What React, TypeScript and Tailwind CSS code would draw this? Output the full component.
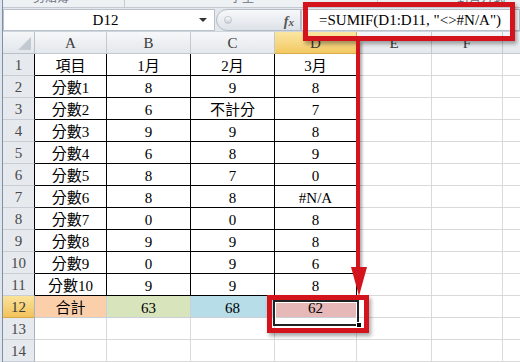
import React from "react";

const data: string[][] = [
  ["項目", "1月", "2月", "3月"],
  ["分數1", "8", "9", "8"],
  ["分數2", "6", "不計分", "7"],
  ["分數3", "9", "9", "8"],
  ["分數4", "6", "8", "9"],
  ["分數5", "8", "7", "0"],
  ["分數6", "8", "8", "#N/A"],
  ["分數7", "0", "0", "8"],
  ["分數8", "9", "9", "8"],
  ["分數9", "0", "9", "6"],
  ["分數10", "9", "9", "8"],
  ["合計", "63", "68", "62"],
];

const colW = ["w-[72px]", "w-[84px]", "w-[84px]", "w-[82px]"];
const totalBg = ["bg-[#fbcfaa]", "bg-[#d8e4bc]", "bg-[#b7dde8]", "bg-[#e6b9b8]"];

function RowHeader({ n, sel, black }: { n: number; sel?: boolean; black?: boolean }) {
  return (
    <div
      className={
        "w-[32px] h-full flex items-center justify-center pt-[2px] text-[15px] border-b border-r " +
        (sel
          ? "bg-gradient-to-b from-[#fbe29a] to-[#f2c35a] text-[#3b3b3b] border-b-[#d4a94a] "
          : "bg-[#e6e9ed] text-[#4a4a4a] border-b-[#c9ced6] ") +
        (black ? "border-r-black" : "border-r-[#a9b4c2]")
      }
    >
      {n}
    </div>
  );
}

function GrayCells() {
  return (
    <>
      <div className="w-[75px] h-full border-r border-b border-[#d9d9d9]" />
      <div className="w-[71px] h-full border-r border-b border-[#d9d9d9]" />
      <div className="flex-1 h-full border-b border-[#d9d9d9]" />
    </>
  );
}

export default function App() {
  return (
    <div className="relative w-[520px] h-[362px] overflow-hidden bg-white flex font-['Liberation_Serif','Noto_Sans_CJK_TC',serif]">
      {/* left window edge */}
      <div className="w-[3px] h-full bg-[#dfe5ec] border-r border-[#7f8fa4]" />

      <div className="flex-1 flex flex-col">
        {/* ribbon remnant */}
        <div className="h-[11px] bg-[#eef1f4] border-b border-[#c3c9d1] flex overflow-hidden text-[12px] text-[#6b7280] leading-none">
          <div className="w-[122px] border-r border-[#c6ccd4] relative">
            <span className="absolute left-[30px] top-[-8px]">剪貼簿</span>
          </div>
          <div className="w-[253px] border-r border-[#c6ccd4] relative">
            <span className="absolute left-[105px] top-[-8px]">字型</span>
          </div>
          <div className="flex-1 relative">
            <span className="absolute left-[79px] top-[-8px]">對齊方式</span>
          </div>
        </div>

        {/* formula bar */}
        <div className="h-[27px] bg-[#e4e8ed] flex items-start pt-[1px] border-b border-[#cfd5dc]">
          <div className="w-[212px] h-[22px] bg-white border border-[#b9c1cb] flex items-center relative">
            <span className="flex-1 text-center text-[15px] text-black pl-[8px]">D12</span>
            <span className="w-0 h-0 border-l-[4px] border-r-[4px] border-t-[4px] border-l-transparent border-r-transparent border-t-[#333] mr-[7px]" />
          </div>
          <div className="ml-[1px] w-[85px] h-[22px] rounded-l-full border border-[#b3bbc5] bg-gradient-to-b from-[#f7f8fa] to-[#dde2e8] flex items-center relative">
            <span className="ml-[7px] w-[8px] h-[8px] rounded-full bg-gradient-to-b from-white to-[#c7ced6] border border-[#c0c7cf]" />
            <span className="absolute right-[6px] top-[1px] italic font-bold text-[14px] text-[#555]">f<span className="text-[11px]">x</span></span>
          </div>
          <div className="flex-1 h-[22px] bg-white border border-[#b9c1cb] flex items-center pl-[17px] text-[15px] text-black whitespace-nowrap">
            =SUMIF(D1:D11, "&lt;&gt;#N/A")
          </div>
        </div>

        {/* column headers */}
        <div className="h-[22px] flex text-[15px] text-[#3a3a3a]">
          <div className="w-[32px] h-full bg-gradient-to-b from-[#f4f6f8] to-[#e2e6eb] border-r border-b border-[#b8c0ca] relative overflow-hidden">
            <div className="absolute right-[3px] bottom-[3px] w-0 h-0 border-l-[12px] border-t-[12px] border-l-transparent border-t-transparent border-r-0 border-b-0" style={{ borderRightWidth: 0 }} />
            <svg className="absolute right-[3px] bottom-[3px]" width="13" height="13" viewBox="0 0 13 13">
              <polygon points="13,0 13,13 0,13" fill="#c3c9d0" />
            </svg>
          </div>
          {["A", "B", "C"].map((c, i) => (
            <div key={c} className={colW[i] + " h-full bg-gradient-to-b from-[#f6f7f9] to-[#e4e8ec] border-r border-b border-[#c3c9d1] flex items-center justify-center pt-[2px]"}>
              {c}
            </div>
          ))}
          <div className="w-[82px] h-full bg-gradient-to-b from-[#fbe6a2] to-[#f3c962] border-r border-b border-[#d9ad4e] flex items-center justify-center pt-[2px]">
            D
          </div>
          <div className="w-[75px] h-full bg-gradient-to-b from-[#f6f7f9] to-[#e4e8ec] border-r border-b border-[#c3c9d1] flex items-center justify-center pt-[2px]">
            E
          </div>
          <div className="w-[71px] h-full bg-gradient-to-b from-[#f6f7f9] to-[#e4e8ec] border-r border-b border-[#c3c9d1] flex items-center justify-center pt-[2px]">
            F
          </div>
          <div className="flex-1 h-full bg-gradient-to-b from-[#f6f7f9] to-[#e4e8ec] border-b border-[#c3c9d1]" />
        </div>

        {/* data rows */}
        {data.map((row, r) => {
          const isTotal = r === 11;
          return (
            <div key={r} className="h-[22px] flex text-[15px] text-black">
              <RowHeader n={r + 1} sel={isTotal} black={!isTotal} />
              {row.map((v, c) => (
                <div
                  key={c}
                  className={
                    colW[c] +
                    " h-full flex items-center justify-center pt-[3px] whitespace-nowrap " +
                    (isTotal
                      ? totalBg[c] + " border-r border-b border-[#c9d0d8]"
                      : "border-r border-b border-black")
                  }
                >
                  {v}
                </div>
              ))}
              <GrayCells />
            </div>
          );
        })}
        {[13, 14].map((n) => (
          <div key={n} className="h-[22px] flex">
            <RowHeader n={n} />
            {colW.map((w, i) => (
              <div key={i} className={w + " h-full border-r border-b border-[#d9d9d9]"} />
            ))}
            <GrayCells />
          </div>
        ))}
      </div>

      {/* selected cell D12 */}
      <div className="absolute left-[273px] top-[300px] w-[86px] h-[26px] border-2 border-[#222]">
        <div className="w-full h-full border border-white" />
      </div>
      <div className="absolute left-[356px] top-[322px] w-[6px] h-[6px] bg-black border border-white" />

      {/* red annotation: formula box */}
      <div className="absolute left-[303px] top-[2px] w-[212px] h-[39px] border-[5px] border-[#d3141c] shadow-[2px_3px_4px_rgba(0,0,0,0.35)]" />

      {/* red arrow line */}
      <div className="absolute left-[356px] top-[41px] w-[4px] h-[228px] bg-[#d3141c] shadow-[2px_1px_3px_rgba(0,0,0,0.35)]" />
      <svg className="absolute left-[349px] top-[266px]" width="20" height="32" viewBox="0 0 20 32">
        <polygon points="2,1 18,1 10,30" fill="#d3141c" />
      </svg>

      {/* red annotation: D12 box */}
      <div className="absolute left-[267px] top-[295px] w-[102px] h-[38px] border-[5px] border-[#d3141c] shadow-[2px_3px_4px_rgba(0,0,0,0.35)]" />
    </div>
  );
}
